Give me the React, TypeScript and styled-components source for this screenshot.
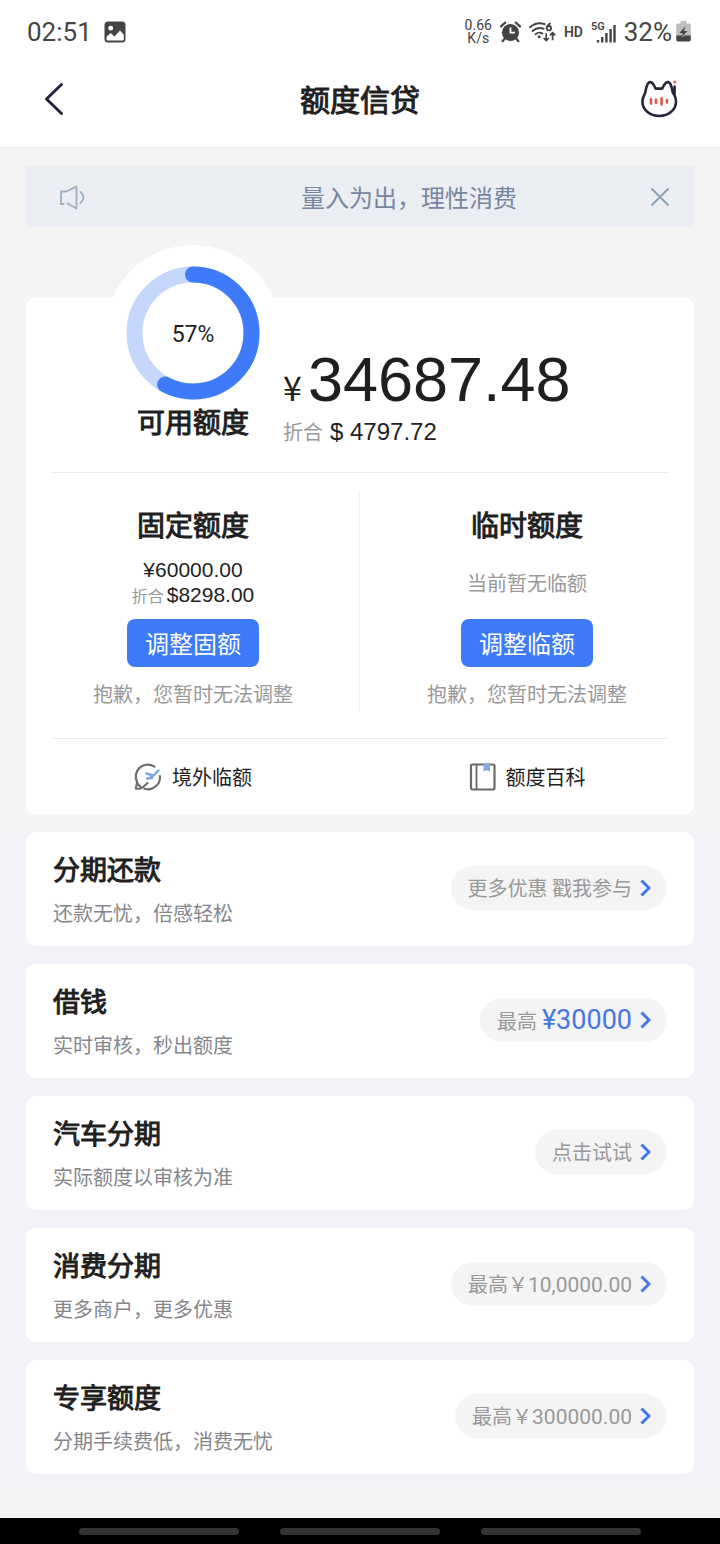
import React from 'react';
import styled, { createGlobalStyle } from 'styled-components';

const blue = '#3e7bfa';
const ink = '#1f1f1f';
const sans = "'Noto Sans CJK SC', sans-serif";
const latin = "Roboto, 'Noto Sans CJK SC', sans-serif";
const numeric = "'Liberation Sans', 'Noto Sans CJK SC', sans-serif";

const GlobalStyle = createGlobalStyle`
  *, *::before, *::after { box-sizing: border-box; }
  body { margin: 0; background: #f4f4f4; color: ${ink}; font-family: ${sans}; }
  h1, h2, h3, p { margin: 0; }
  h1, h2, h3 { font-weight: 400; -webkit-text-stroke: 1px ${ink}; }
  button { border: 0; padding: 0; background: none; font: inherit; color: inherit; cursor: pointer; }
  a { color: inherit; text-decoration: none; }
  svg { display: block; flex: none; }
`;

const Screen = styled.div`
  display: flex;
  flex-direction: column;
  min-height: 100vh;
`;

const StatusBar = styled.div`
  display: flex;
  justify-content: space-between;
  align-items: center;
  height: 52px;
  padding: 11px 29px 0 27px;
  background: #fff;
  color: #444;
  font-family: ${latin};
`;

const StatusGroup = styled.div<{ $gap: number }>`
  display: flex;
  align-items: center;
  gap: ${(p) => p.$gap}px;
`;

const Clock = styled.span`
  font-size: 26px;
  line-height: 32px;
`;

const NetSpeed = styled.span`
  font-size: 14px;
  line-height: 13px;
  text-align: center;
`;

const Badge = styled.span`
  font-size: 14px;
  line-height: 16px;
  font-weight: 600;
`;

const Signal = styled.span`
  display: flex;
  align-items: flex-start;
  height: 22px;
  font-size: 11px;
  line-height: 11px;
  font-weight: 600;
`;

const SignalBars = styled.svg`
  margin: 2px 0 0 -9px;
`;

const TopBar = styled.header`
  display: grid;
  grid-template-columns: 44px 1fr 44px;
  align-items: center;
  height: 96px;
  padding: 0 39px 2px;
  background: #fff;
  border-bottom: 1px solid #ececec;
`;

const IconButton = styled.button<{ $align?: string }>`
  display: flex;
  align-items: center;
  justify-content: ${(p) => p.$align ?? 'center'};
  height: 44px;
  padding: 0 5px;
`;

const PageTitle = styled.h1`
  padding-bottom: 2px;
  font-size: 30px;
  line-height: 36px;
  text-align: center;
`;

const Main = styled.main`
  flex: 1;
  padding: 18px 0 30px;
`;

const Notice = styled.div`
  display: flex;
  align-items: center;
  height: 61px;
  margin: 0 26px;
  padding: 0 19px 0 32px;
  background: #eaeef3;
  color: #7786a0;
`;

const NoticeText = styled.p`
  flex: 1;
  padding-left: 87px;
  font-size: 24px;
  line-height: 32px;
  text-align: center;
`;

const QuotaCard = styled.section`
  margin: 71px 26px 18px;
  border-radius: 9px;
  background: #fff;
`;

const Overview = styled.div`
  display: grid;
  grid-template-columns: calc(25% + 88px) 1fr;
  column-gap: 2px;
  align-items: end;
`;

const RingColumn = styled.div`
  justify-self: end;
  margin-top: -53px;
  padding-bottom: 29px;
  text-align: center;
`;

const RingText = styled.text`
  font-family: ${latin};
  font-size: 23px;
  fill: ${ink};
`;

const Heading = styled.h2`
  padding-bottom: 4px;
  font-size: 28px;
  line-height: 36px;
`;

const RingLabel = styled(Heading)`
  position: relative;
  margin-top: -18px;
`;

const Amounts = styled.div`
  padding-bottom: 24px;
  white-space: nowrap;
`;

const Total = styled.p`
  display: flex;
  align-items: baseline;
  gap: 6px;
  font-family: ${numeric};
  font-size: 63px;
  line-height: 64px;
`;

const Currency = styled.span`
  font-family: ${sans};
  font-size: 34px;
  line-height: 34px;
`;

const TotalConverted = styled.p`
  display: flex;
  align-items: baseline;
  gap: 7px;
  margin-top: 5px;
  font-family: ${numeric};
  font-size: 24px;
  line-height: 32px;
`;

const Muted = styled.span<{ $size: number }>`
  color: #999;
  font-family: ${sans};
  font-size: ${(p) => p.$size}px;
`;

const Rule = styled.hr`
  height: 1px;
  margin: 0 26px;
  border: 0;
  background: #ebebeb;
`;

const Halves = styled.div`
  display: grid;
  grid-template-columns: 1fr 1fr;
  padding: 19px 0 26px;
`;

const Half = styled.div`
  display: flex;
  flex-direction: column;
  align-items: center;
  padding: 14px 0 4px;
  & + & { box-shadow: -1px 0 0 #f0f0f0; }
`;

const Values = styled.div`
  display: flex;
  flex-direction: column;
  align-items: center;
  justify-content: center;
  height: 50px;
  margin: 11px 0 12px;
  font-family: ${numeric};
  font-size: 21px;
  line-height: 25px;
`;

const Converted = styled.p`
  display: flex;
  align-items: baseline;
  gap: 3px;
`;

const AdjustButton = styled.button`
  height: 48px;
  padding: 0 18px;
  border-radius: 8px;
  background: ${blue};
  color: #fff;
  font-size: 24px;
  line-height: 32px;
`;

const Hint = styled.p`
  margin-top: 13px;
  color: #999;
  font-size: 20px;
  line-height: 28px;
`;

const Shortcuts = styled.nav`
  display: grid;
  grid-template-columns: 1fr 1fr;
`;

const Shortcut = styled.a`
  display: flex;
  align-items: center;
  justify-content: center;
  gap: 10px;
  height: 75px;
  font-size: 20px;
  line-height: 28px;
`;

const Products = styled.ul`
  display: flex;
  flex-direction: column;
  gap: 18px;
  margin: 0;
  padding: 0 26px 14px;
  background: #f2f3f8;
  list-style: none;
`;

const Product = styled.li`
  display: flex;
  align-items: center;
  justify-content: space-between;
  padding: 17px 27px 19px;
  border-radius: 9px;
  background: #fff;
`;

const ProductTitle = styled.h3`
  font-size: 27px;
  line-height: 40px;
`;

const ProductNote = styled.p`
  margin-top: 10px;
  color: #85868c;
  font-size: 20px;
  line-height: 28px;
`;

const Pill = styled.a`
  display: flex;
  align-items: center;
  gap: 8px;
  height: 44px;
  padding: 0 16px 0 17px;
  border-radius: 22px;
  background: #f4f4f4;
  color: #999;
  font-size: 20px;
  line-height: 28px;
  white-space: nowrap;
`;

const PillText = styled.span`
  display: flex;
  align-items: baseline;
`;

const Figure = styled.span<{ $strong?: boolean }>`
  margin-left: ${(p) => (p.$strong ? 5 : 0)}px;
  color: ${(p) => (p.$strong ? '#4777e0' : 'inherit')};
  font-family: ${latin};
  font-size: ${(p) => (p.$strong ? 27 : 21)}px;
`;

const GestureBar = styled.div`
  display: flex;
  align-items: center;
  justify-content: center;
  gap: 41px;
  height: 27px;
  background: #000;
`;

const GestureHandle = styled.span`
  width: 160px;
  height: 7px;
  border-radius: 4px;
  background: #333;
`;

const PictureIcon = () => (
  <svg width="22" height="22" viewBox="0 0 22 22" aria-hidden="true">
    <rect x="0.5" y="0.5" width="21" height="21" rx="3.5" fill="#444" />
    <circle cx="6.7" cy="7.2" r="2.4" fill="#fff" />
    <path d="M2.6 15.5 6.8 12l3.6 3.4 5.6-6 3.8 4v5.2q0 .8-.8.8H3.4q-.8 0-.8-.8z" fill="#fff" />
  </svg>
);

const AlarmIcon = () => (
  <svg width="21" height="22" viewBox="0 0 21 22" aria-hidden="true">
    <circle cx="10.5" cy="11.5" r="8.6" fill="#444" />
    <path d="M1 5.4 5.2 1.6M20 5.4l-4.2-3.8M4.6 17.8l-2 2.4M16.4 17.8l2 2.4" stroke="#444" strokeWidth="2.2" strokeLinecap="round" />
    <path d="M10.5 6.4v5.3h4.4" fill="none" stroke="#fff" strokeWidth="1.8" />
  </svg>
);

const WifiIcon = () => (
  <svg width="27" height="22" viewBox="0 0 27 22" fill="none" stroke="#444" aria-hidden="true">
    <path d="M1 6.2Q8 .2 15.6 3.2M3.6 10q5.2-4.6 11-2.2M6.6 13.2q3.4-2.8 6.8-.6" strokeWidth="1.9" strokeLinecap="round" />
    <circle cx="10.2" cy="15.8" r="1.5" fill="#444" stroke="none" />
    <path d="M21.6 2q-3.8 2.6-3.8 5.4" strokeWidth="1.8" />
    <circle cx="19.9" cy="7.2" r="2.2" strokeWidth="1.8" />
    <path d="M17.2 12.2v7.4M14.6 17l2.6 2.6 2.6-2.6M23.6 19.2v-7.4M21 14.4l2.6-2.6 2.6 2.6" strokeWidth="1.7" />
  </svg>
);

const BatteryIcon = () => (
  <svg width="15" height="21" viewBox="0 0 15 21" aria-hidden="true">
    <path d="M4.5 0h6v2.4H13q1.8 0 1.8 1.8V15H.2V4.2q0-1.8 1.8-1.8h2.5z" fill="#bdbdbd" />
    <path d="M.2 14.5h14.6v4.2q0 1.8-1.8 1.8H2q-1.8 0-1.8-1.8z" fill="#444" />
    <path d="M9.2 5.5 3.4 12h3.4l-1.4 4.8 6-6.8H8z" fill="#444" />
    <path d="m5.4 16.8 2-2.3h1.2z" fill="#fff" />
  </svg>
);

const BackIcon = () => (
  <svg width="20" height="34" viewBox="0 0 20 34" aria-hidden="true">
    <path d="M17.5 2.5 2.5 17l15 14.5" fill="none" stroke="#23233a" strokeWidth="3" strokeLinecap="round" strokeLinejoin="round" />
  </svg>
);

const CatIcon = () => (
  <svg width="38" height="38" viewBox="0 0 38 38" fill="none" aria-hidden="true">
    <path
      d="M34.6 6.5v9c.9 2 1.4 3.8 1.4 6C36 29.7 28.8 36 19.2 36S2.4 29.7 2.4 21.5c0-3.5 1.6-6 2.8-8.5C6 9.4 6.5 2.4 10 2.1c3.2-.2 4 3.7 5.6 6.5h6.6c1.5-2.8 2.6-6.7 5.8-6.5 3.5.3 3.8 6.8 4.8 10.5.5 1.2 1.2 2 1.8 3"
      stroke="#26263a" strokeWidth="2.6" strokeLinecap="round" strokeLinejoin="round"
    />
    <circle cx="34.8" cy="2" r="1.6" fill="#e8625a" />
    <path d="M11 19v4.5M16 19.5V23M21.6 18.4v6M27 20v2.5" stroke="#e0574d" strokeWidth="2.6" strokeLinecap="round" />
  </svg>
);

const SpeakerIcon = () => (
  <svg width="28" height="26" viewBox="0 0 28 26" fill="none" stroke="#9fafc0" strokeWidth="1.8" strokeLinecap="round" strokeLinejoin="round" aria-hidden="true">
    <path d="M5.5 20H3V7.5h5.5l10-5v22l-9-5" />
    <path d="M22.5 8q6 5 0 11" />
  </svg>
);

const CloseIcon = () => (
  <svg width="20" height="20" viewBox="0 0 20 20" aria-hidden="true">
    <path d="m2 2 16 16M18 2 2 18" stroke="#8a9fb5" strokeWidth="1.8" strokeLinecap="round" />
  </svg>
);

const PlaneIcon = () => (
  <svg width="28" height="28" viewBox="0 0 28 28" fill="none" strokeLinecap="round" strokeLinejoin="round" aria-hidden="true">
    <path d="M20.5 3.6A12 12 0 0 0 3.2 19.2l-1.4 6.3q4.2.8 7-1.2l4.7-4.3" stroke="#6e6e6e" strokeWidth="2.2" />
    <path d="m3.4 20.5 3.1 3.3M10.5 25.7A12 12 0 0 0 25.9 13" stroke="#6e6e6e" strokeWidth="2.2" />
    <path d="m24.5 7.5-6 5.8-4.5 2.5M12.5 10.5l5 1.5M13.2 15.5l4.800-.5" stroke="#7da7e0" strokeWidth="2.4" />
  </svg>
);

const BookIcon = () => (
  <svg width="27" height="28" viewBox="0 0 27 28" aria-hidden="true">
    <rect x="2" y="1.5" width="23.5" height="25" rx="1.5" fill="none" stroke="#6a6a6a" strokeWidth="2.2" />
    <path d="M7.5 2v24.5" stroke="#6a6a6a" strokeWidth="1.8" />
    <path d="M14.5.5H21v8l-3.200-1.200-3.300 1.200z" fill="#84a9dd" />
  </svg>
);

const Chevron = () => (
  <svg width="11" height="18" viewBox="0 0 11 18" aria-hidden="true">
    <path d="M1.5 1.5 9 9l-7.5 7.5" fill="none" stroke="#4278ee" strokeWidth="3" />
  </svg>
);

const RING_RADIUS = 58.5;
const RING_LENGTH = 2 * Math.PI * RING_RADIUS;

const QuotaRing = ({ ratio }: { ratio: number }) => {
  const label = `${Math.floor(ratio * 100)}%`;
  return (
    <svg width="176" height="176" viewBox="0 0 176 176" role="img" aria-label={label}>
      <circle cx="88" cy="88" r="88" fill="#fff" />
      <circle cx="88" cy="88" r={RING_RADIUS} fill="none" stroke="#c5d7fd" strokeWidth="16" />
      <circle
        cx="88" cy="88" r={RING_RADIUS} fill="none" stroke={blue} strokeWidth="16" strokeLinecap="round"
        strokeDasharray={`${RING_LENGTH * ratio} ${RING_LENGTH}`} transform="rotate(-90 88 88)"
      />
      <RingText x="88" y="97" textAnchor="middle">{label}</RingText>
    </svg>
  );
};

const products = [
  { title: '分期还款', note: '还款无忧，倍感轻松', label: '更多优惠 戳我参与' },
  { title: '借钱', note: '实时审核，秒出额度', label: '最高', figure: '¥30000', strong: true },
  { title: '汽车分期', note: '实际额度以审核为准', label: '点击试试' },
  { title: '消费分期', note: '更多商户，更多优惠', label: '最高￥', figure: '10,0000.00' },
  { title: '专享额度', note: '分期手续费低，消费无忧', label: '最高￥', figure: '300000.00' },
];

export default function App() {
  return (
    <Screen lang="zh-CN">
      <GlobalStyle />
      <StatusBar>
        <StatusGroup $gap={12}>
          <Clock>02:51</Clock>
          <PictureIcon />
        </StatusGroup>
        <StatusGroup $gap={8}>
          <NetSpeed>0.66<br />K/s</NetSpeed>
          <AlarmIcon />
          <WifiIcon />
          <Badge>HD</Badge>
          <Signal>
            5G
            <SignalBars width="20" height="20" viewBox="0 0 20 20" aria-hidden="true">
              <path d="M2 17v2.5M6.2 14v5.5M10.4 10v9.5M14.6 6v13.5M18.5 2v17.5" stroke="#444" strokeWidth="2.4" />
            </SignalBars>
          </Signal>
          <StatusGroup $gap={4}>
            <Clock>32%</Clock>
            <BatteryIcon />
          </StatusGroup>
        </StatusGroup>
      </StatusBar>

      <TopBar>
        <IconButton $align="flex-start" aria-label="返回"><BackIcon /></IconButton>
        <PageTitle>额度信贷</PageTitle>
        <IconButton aria-label="客服"><CatIcon /></IconButton>
      </TopBar>

      <Main>
        <Notice>
          <SpeakerIcon />
          <NoticeText>量入为出，理性消费</NoticeText>
          <IconButton aria-label="关闭"><CloseIcon /></IconButton>
        </Notice>

        <QuotaCard>
          <Overview>
            <RingColumn>
              <QuotaRing ratio={0.578} />
              <RingLabel>可用额度</RingLabel>
            </RingColumn>
            <Amounts>
              <Total><Currency>¥</Currency>34687.48</Total>
              <TotalConverted><Muted $size={20}>折合</Muted>$ 4797.72</TotalConverted>
            </Amounts>
          </Overview>
          <Rule />
          <Halves>
            <Half>
              <Heading>固定额度</Heading>
              <Values>
                <p>¥60000.00</p>
                <Converted><Muted $size={16}>折合</Muted>$8298.00</Converted>
              </Values>
              <AdjustButton>调整固额</AdjustButton>
              <Hint>抱歉，您暂时无法调整</Hint>
            </Half>
            <Half>
              <Heading>临时额度</Heading>
              <Values><Muted $size={20}>当前暂无临额</Muted></Values>
              <AdjustButton>调整临额</AdjustButton>
              <Hint>抱歉，您暂时无法调整</Hint>
            </Half>
          </Halves>
          <Rule />
          <Shortcuts>
            <Shortcut href="#overseas"><PlaneIcon />境外临额</Shortcut>
            <Shortcut href="#wiki"><BookIcon />额度百科</Shortcut>
          </Shortcuts>
        </QuotaCard>

        <Products>
          {products.map((item) => (
            <Product key={item.title}>
              <div>
                <ProductTitle>{item.title}</ProductTitle>
                <ProductNote>{item.note}</ProductNote>
              </div>
              <Pill href="#apply">
                <PillText>
                  {item.label}
                  {item.figure && <Figure $strong={item.strong}>{item.figure}</Figure>}
                </PillText>
                <Chevron />
              </Pill>
            </Product>
          ))}
        </Products>
      </Main>

      <GestureBar>
        <GestureHandle />
        <GestureHandle />
        <GestureHandle />
      </GestureBar>
    </Screen>
  );
}
